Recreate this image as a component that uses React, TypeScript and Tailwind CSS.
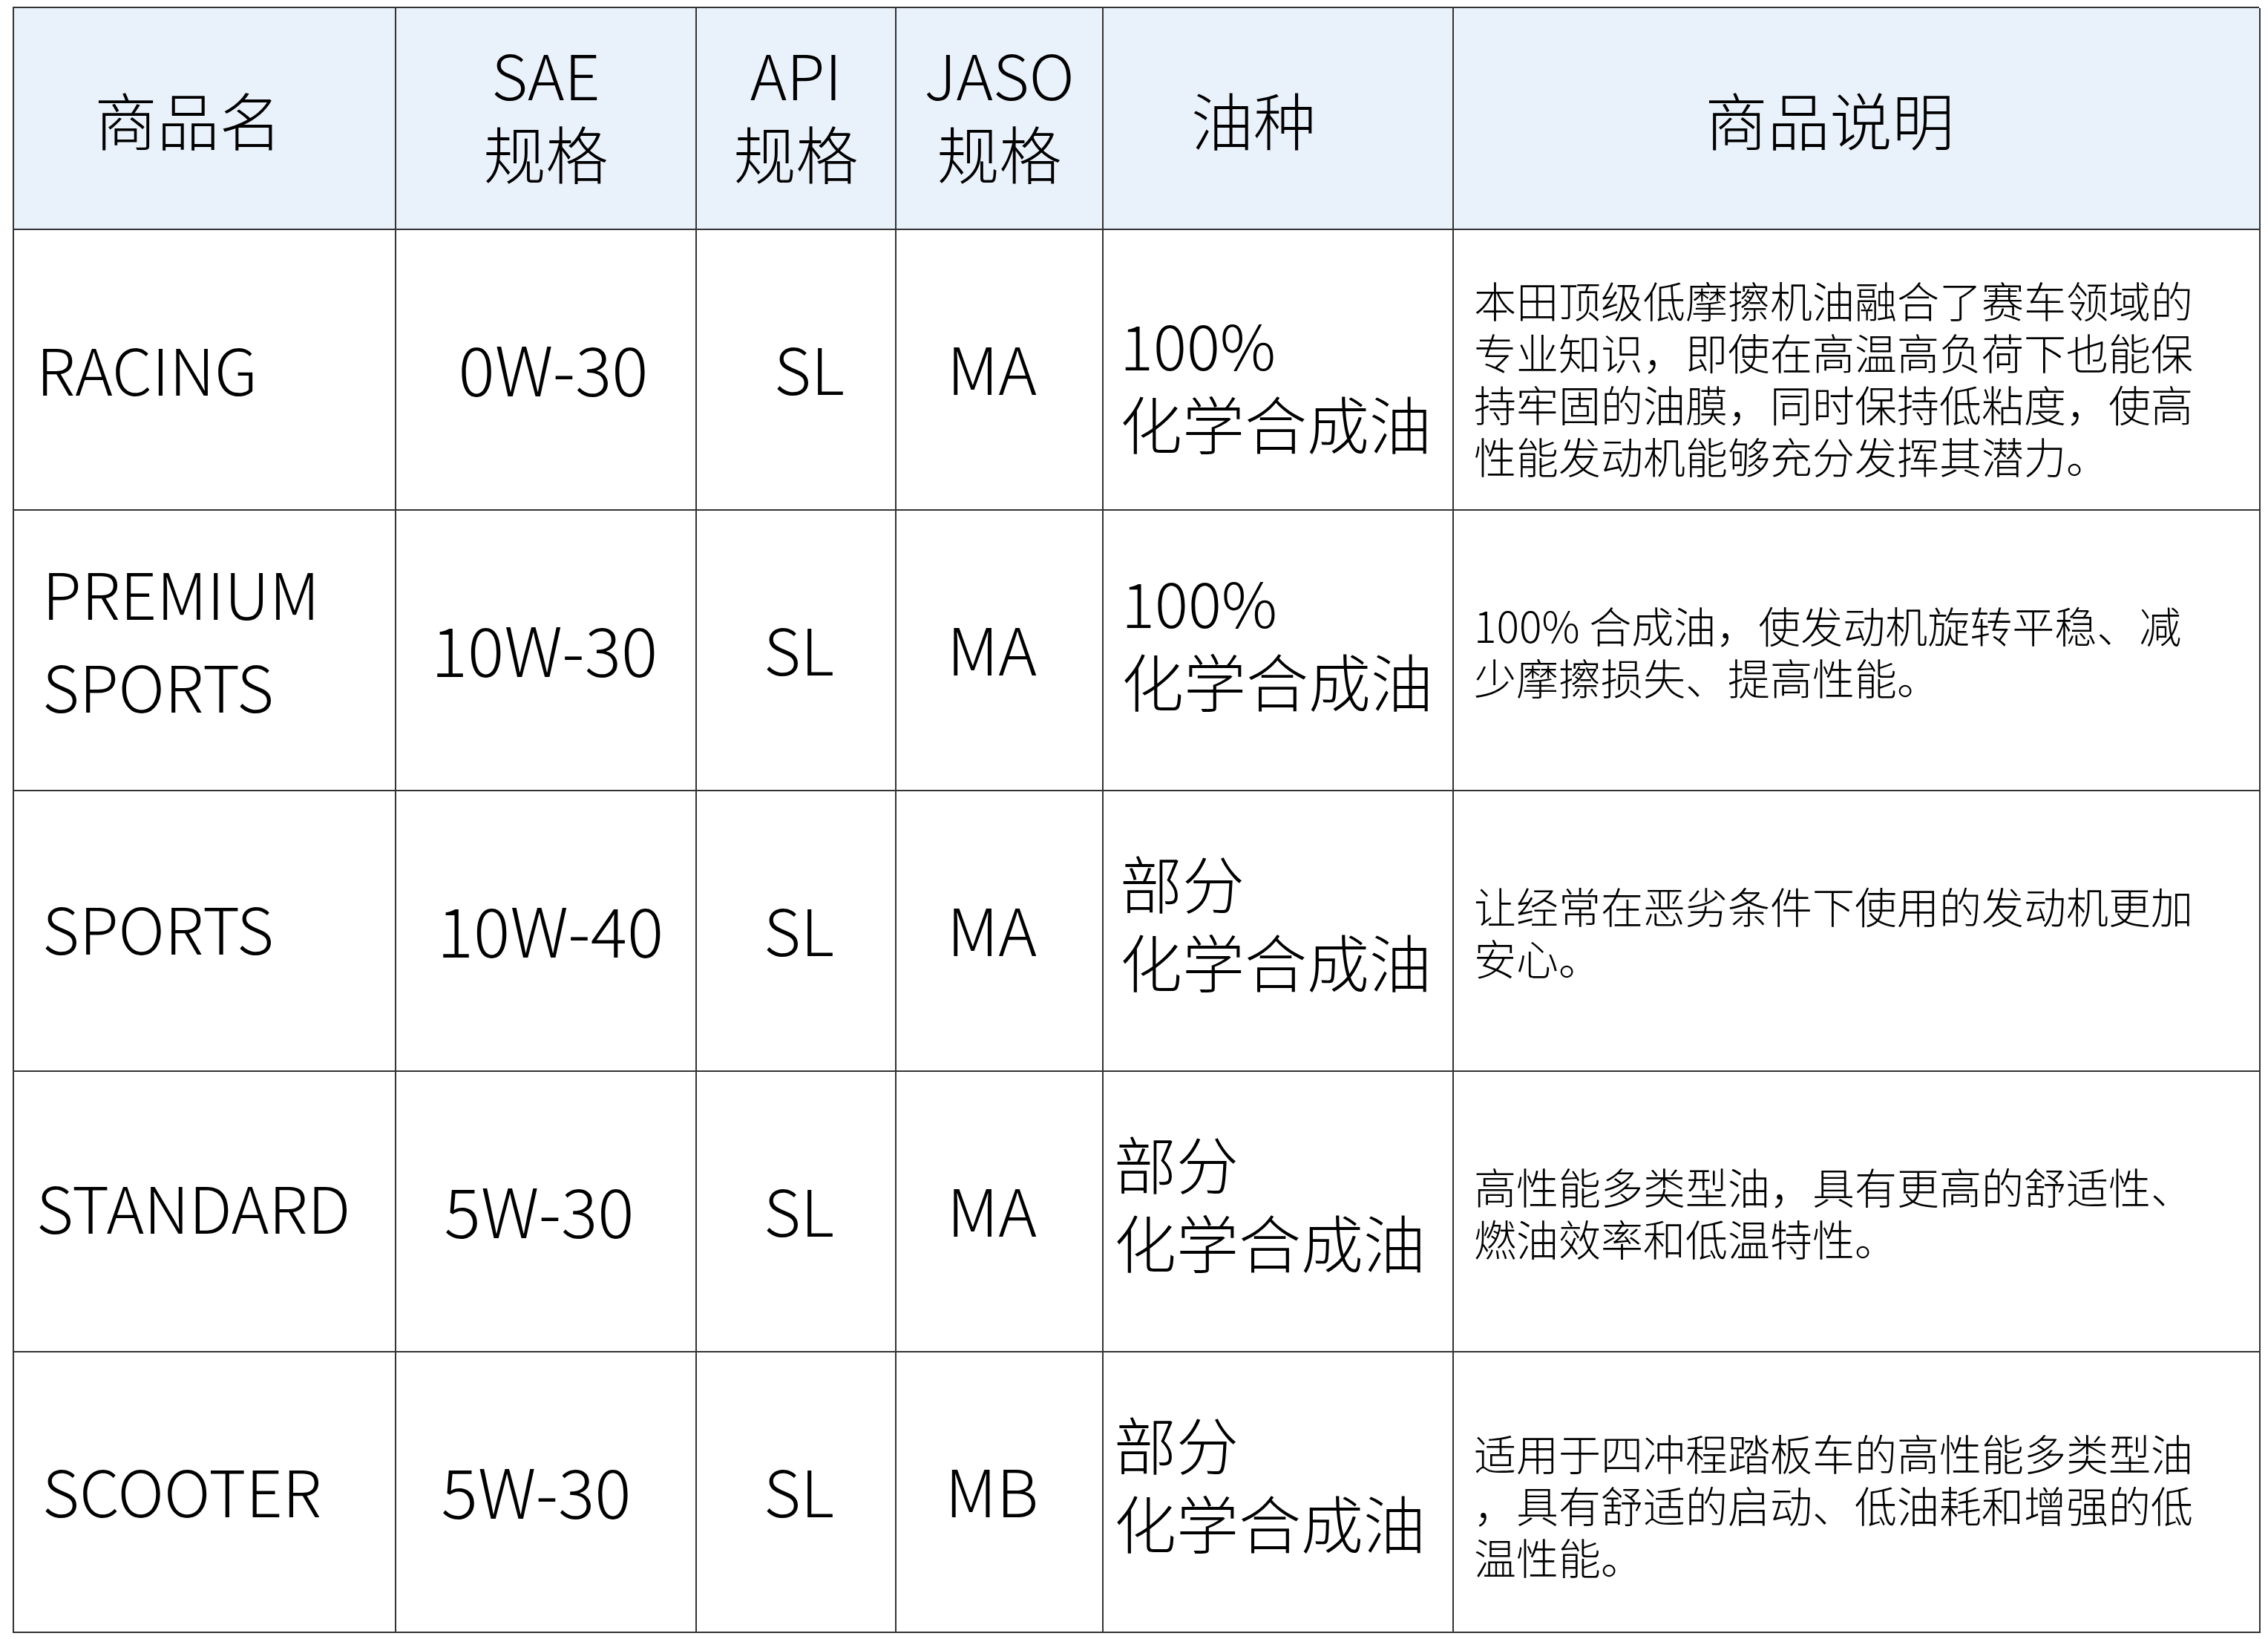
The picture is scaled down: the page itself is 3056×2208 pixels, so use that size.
const FONT = "font-['Noto_Sans_CJK_SC','Noto_Sans',sans-serif] font-light"

type Row = {
  name: string[]
  namePad: string
  sae: string
  saePad: string
  api: string
  jaso: string
  oil: string[]
  oilPad: string
  desc: string[]
  descPad: string
}

const rows: Row[] = [
  {
    name: ['RACING'],
    namePad: 'pl-[30px] pb-[6px]',
    sae: '0W-30',
    saePad: 'pl-[20px]',
    api: 'SL',
    jaso: 'MA',
    oil: ['100%', '化学合成油'],
    oilPad: 'pl-[22px] pt-[36px]',
    desc: [
      '本田顶级低摩擦机油融合了赛车领域的',
      '专业知识，即使在高温高负荷下也能保',
      '持牢固的油膜，同时保持低粘度，使高',
      '性能发动机能够充分发挥其潜力。',
    ],
    descPad: 'pt-[20px]',
  },
  {
    name: ['PREMIUM', 'SPORTS'],
    namePad: 'pl-[38px] pb-[32px]',
    sae: '10W-30',
    saePad: 'pr-[4px]',
    api: 'SL',
    jaso: 'MA',
    oil: ['100%', '化学合成油'],
    oilPad: 'pl-[24px] pb-[26px]',
    desc: ['100% 合成油，使发动机旋转平稳、减', '少摩擦损失、提高性能。'],
    descPad: '',
  },
  {
    name: ['SPORTS'],
    namePad: 'pl-[38px] pb-[12px]',
    sae: '10W-40',
    saePad: 'pl-[12px]',
    api: 'SL',
    jaso: 'MA',
    oil: ['部分', '化学合成油'],
    oilPad: 'pl-[22px] pb-[26px]',
    desc: ['让经常在恶劣条件下使用的发动机更加', '安心。'],
    descPad: '',
  },
  {
    name: ['STANDARD'],
    namePad: 'pl-[30px] pb-[16px]',
    sae: '5W-30',
    saePad: 'pr-[18px]',
    api: 'SL',
    jaso: 'MA',
    oil: ['部分', '化学合成油'],
    oilPad: 'pl-[14px] pb-[26px]',
    desc: ['高性能多类型油，具有更高的舒适性、', '燃油效率和低温特性。'],
    descPad: '',
  },
  {
    name: ['SCOOTER'],
    namePad: 'pl-[38px] pb-[8px]',
    sae: '5W-30',
    saePad: 'pr-[26px]',
    api: 'SL',
    jaso: 'MB',
    oil: ['部分', '化学合成油'],
    oilPad: 'pl-[14px] pb-[26px]',
    desc: [
      '适用于四冲程踏板车的高性能多类型油',
      '，具有舒适的启动、低油耗和增强的低',
      '温性能。',
    ],
    descPad: 'pt-[32px]',
  },
]

const cell = 'border-r-2 border-b-2 border-[#333333] flex items-center'

function HeaderCell({ lines, className = '' }: { lines: string[]; className?: string }) {
  return (
    <div className={`${cell} justify-center bg-[#e9f1fa] text-center text-[84px] leading-[106px] ${className}`}>
      <div>
        {lines.map((l) => (
          <div key={l}>{l}</div>
        ))}
      </div>
    </div>
  )
}

export default function App() {
  return (
    <div className={`${FONT} bg-white w-[3056px] h-[2208px] pl-[17px] pt-[9px] text-black`}>
      <div className="grid grid-cols-[515px_405px_269px_279px_472px_1087px] grid-rows-[299px_repeat(5,378px)] border-l-2 border-t-2 border-[#333333] w-[3027px]">
        <HeaderCell lines={['商品名']} className="pr-[44px]" />
        <HeaderCell lines={['SAE', '规格']} className="pb-[16px]" />
        <HeaderCell lines={['API', '规格']} className="pb-[16px]" />
        <HeaderCell lines={['JASO', '规格']} className="pb-[16px]" />
        <HeaderCell lines={['油种']} className="pr-[66px]" />
        <HeaderCell lines={['商品说明']} className="pr-[72px]" />

        {rows.map((r, idx) => (
          <div key={r.name.join()} className="contents">
            <div className={`${cell} ${r.namePad} text-[86px] leading-[125px]`}>
              <div>
                {r.name.map((n) => (
                  <div key={n}>{n}</div>
                ))}
              </div>
            </div>
            <div className={`${cell} ${r.saePad} justify-center pb-[8px] text-[92px]`}>{r.sae}</div>
            <div
              className={`${cell} justify-center pb-[8px] text-[86px] ${idx === 0 ? 'pl-[36px]' : 'pl-[8px]'}`}
            >
              {r.api}
            </div>
            <div className={`${cell} justify-center pb-[8px] pr-[20px] text-[88px]`}>{r.jaso}</div>
            <div className={`${cell} ${r.oilPad} text-[84px] leading-[106px]`}>
              <div>
                {r.oil.map((o) => (
                  <div key={o}>{o}</div>
                ))}
              </div>
            </div>
            <div className={`${cell} ${r.descPad} pl-[27px] text-[57px] leading-[70px]`}>
              <div className="whitespace-nowrap">
                {r.desc.map((d, i) => (
                  <div key={i}>{d}</div>
                ))}
              </div>
            </div>
          </div>
        ))}
      </div>
    </div>
  )
}
